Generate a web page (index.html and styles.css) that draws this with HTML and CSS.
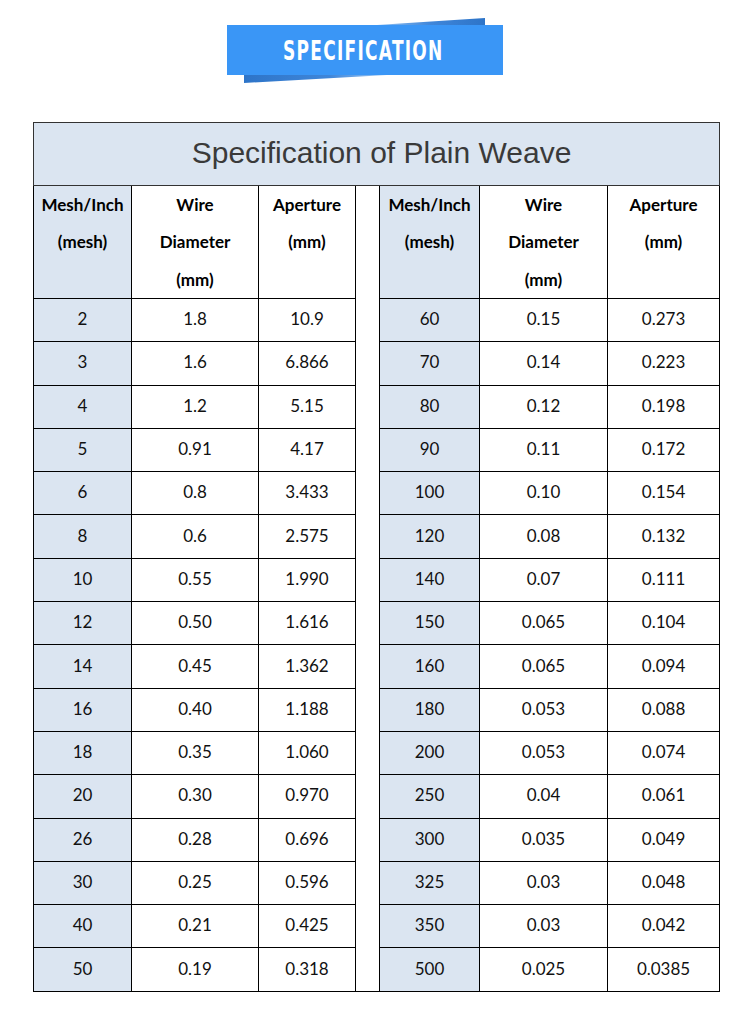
FILE: index.html
```html
<!DOCTYPE html>
<html lang="en">
<head>
<meta charset="utf-8">
<title>Specification of Plain Weave</title>
<link rel="stylesheet" href="styles.css">
</head>
<body>
<div class="page">
  <div class="banner">
    <svg class="banner-bg" width="276" height="66" viewBox="0 0 276 66" aria-hidden="true">
      <defs>
        <linearGradient id="shTop" x1="0" y1="0" x2="1" y2="0">
          <stop offset="0" stop-color="#8fc0f3"/>
          <stop offset="0.5" stop-color="#3f86d9"/>
          <stop offset="1" stop-color="#2d74c8"/>
        </linearGradient>
        <linearGradient id="shBot" x1="0" y1="0" x2="1" y2="0">
          <stop offset="0" stop-color="#2d74c8"/>
          <stop offset="0.6" stop-color="#3f86d9"/>
          <stop offset="1" stop-color="#9cc8f5"/>
        </linearGradient>
      </defs>
      <polygon points="150,8 258,1 258,8" fill="url(#shTop)"/>
      <polygon points="17,58 160,58 17,66" fill="url(#shBot)"/>
      <rect x="0" y="8" width="276" height="50" fill="#3a96f6"/>
    </svg>
    <span class="banner-text">SPECIFICATION</span>
  </div>

  <table class="spec">
    <colgroup>
      <col class="c-mesh"><col class="c-wire"><col class="c-ap">
      <col class="c-gap">
      <col class="c-mesh2"><col class="c-wire2"><col class="c-ap2">
    </colgroup>
    <tr>
      <th class="title" colspan="7">Specification of Plain Weave</th>
    </tr>
    <tr class="head">
      <th class="mesh">Mesh/Inch<br>(mesh)</th>
      <th>Wire<br>Diameter<br>(mm)</th>
      <th>Aperture<br>(mm)</th>
      <td class="gap" rowspan="17"></td>
      <th class="mesh">Mesh/Inch<br>(mesh)</th>
      <th>Wire<br>Diameter<br>(mm)</th>
      <th>Aperture<br>(mm)</th>
    </tr>
    <tr><td class="mesh">2</td><td>1.8</td><td>10.9</td><td class="mesh">60</td><td>0.15</td><td>0.273</td></tr>
    <tr><td class="mesh">3</td><td>1.6</td><td>6.866</td><td class="mesh">70</td><td>0.14</td><td>0.223</td></tr>
    <tr><td class="mesh">4</td><td>1.2</td><td>5.15</td><td class="mesh">80</td><td>0.12</td><td>0.198</td></tr>
    <tr><td class="mesh">5</td><td>0.91</td><td>4.17</td><td class="mesh">90</td><td>0.11</td><td>0.172</td></tr>
    <tr><td class="mesh">6</td><td>0.8</td><td>3.433</td><td class="mesh">100</td><td>0.10</td><td>0.154</td></tr>
    <tr><td class="mesh">8</td><td>0.6</td><td>2.575</td><td class="mesh">120</td><td>0.08</td><td>0.132</td></tr>
    <tr><td class="mesh">10</td><td>0.55</td><td>1.990</td><td class="mesh">140</td><td>0.07</td><td>0.111</td></tr>
    <tr><td class="mesh">12</td><td>0.50</td><td>1.616</td><td class="mesh">150</td><td>0.065</td><td>0.104</td></tr>
    <tr><td class="mesh">14</td><td>0.45</td><td>1.362</td><td class="mesh">160</td><td>0.065</td><td>0.094</td></tr>
    <tr><td class="mesh">16</td><td>0.40</td><td>1.188</td><td class="mesh">180</td><td>0.053</td><td>0.088</td></tr>
    <tr><td class="mesh">18</td><td>0.35</td><td>1.060</td><td class="mesh">200</td><td>0.053</td><td>0.074</td></tr>
    <tr><td class="mesh">20</td><td>0.30</td><td>0.970</td><td class="mesh">250</td><td>0.04</td><td>0.061</td></tr>
    <tr><td class="mesh">26</td><td>0.28</td><td>0.696</td><td class="mesh">300</td><td>0.035</td><td>0.049</td></tr>
    <tr><td class="mesh">30</td><td>0.25</td><td>0.596</td><td class="mesh">325</td><td>0.03</td><td>0.048</td></tr>
    <tr><td class="mesh">40</td><td>0.21</td><td>0.425</td><td class="mesh">350</td><td>0.03</td><td>0.042</td></tr>
    <tr><td class="mesh">50</td><td>0.19</td><td>0.318</td><td class="mesh">500</td><td>0.025</td><td>0.0385</td></tr>
  </table>
</div>
</body>
</html>
```

FILE: styles.css
```css
html, body {
  margin: 0;
  padding: 0;
  background: #ffffff;
}

.page {
  padding: 25px 0 0 33px;
}

.banner {
  position: relative;
  margin-left: 194px;
  width: 276px;
  height: 50px;
  display: flex;
  align-items: center;
  justify-content: center;
}

.banner-bg {
  position: absolute;
  left: 0;
  top: -8px;
}

.banner-text {
  position: relative;
  display: inline-block;
  margin-left: -4px;
  font-family: "DejaVu Sans", sans-serif;
  font-weight: bold;
  font-size: 27px;
  line-height: 1;
  letter-spacing: 2px;
  color: #ffffff;
  transform: scaleX(0.63);
}

.spec {
  margin-top: 47px;
  border-collapse: collapse;
  table-layout: fixed;
  width: 687px;
  font-family: Lato, "Open Sans", sans-serif;
  color: #111111;
}

.c-mesh { width: 98px; }
.c-wire { width: 127px; }
.c-ap { width: 97px; }
.c-gap { width: 24px; }
.c-mesh2 { width: 100px; }
.c-wire2 { width: 128px; }
.c-ap2 { width: 112px; }

.spec th,
.spec td {
  border: 1px solid #000000;
  padding: 0;
  text-align: center;
}

.spec .title {
  height: 59px;
  padding: 0 0 3px 10px;
  background: #dbe5f1;
  border-color: #333333;
  font-family: "Liberation Sans", Arial, sans-serif;
  font-weight: normal;
  font-size: 30px;
  line-height: 1;
  color: #3a3a3a;
  vertical-align: middle;
}

.head th {
  vertical-align: top;
  font-size: 17px;
  font-weight: bold;
  line-height: 37.3px;
  height: 112px;
  color: #000000;
}

.spec td {
  height: 39.3px;
  font-size: 17px;
  vertical-align: middle;
  padding-bottom: 3px;
}

.spec .mesh {
  background: #dbe5f1;
}

.spec .gap {
  background: #ffffff;
}
```
